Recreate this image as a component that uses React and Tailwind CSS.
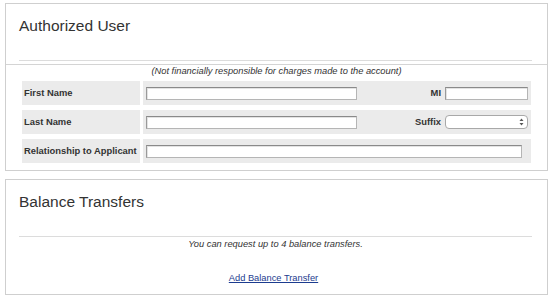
export default function App() {
  const font = { fontFamily: '"Liberation Sans", Arial, Helvetica, sans-serif' };
  const input =
    "h-[13px] bg-white border border-[#b5b5b5] border-t-[#8a8a8a] border-l-[#9a9a9a] shadow-[inset_1px_1px_0_#e3e3e3]";
  return (
    <div className="w-[550px] h-[297px] bg-white pt-[3px] pl-[5px] pr-[2px] text-[#333]" style={font}>
      <div className="border border-[#cfcfcf] h-[168px] flex flex-col">
        <div className="h-[57px] flex flex-col">
          <h2 className="pt-[13px] pl-[13px] text-[15.5px] leading-[18px] text-[#333]">Authorized User</h2>
          <div className="mt-auto ml-[13px] mr-[15px] border-t border-[#dcdcdc]" />
        </div>
        <div className="mt-[3px] border-t border-[#d4d4d4] flex-1">
          <p className="text-center italic text-[9.3px] leading-[11px] mt-[1px]">
            (Not financially responsible for charges made to the account)
          </p>
          <div className="mt-[4px] ml-[16px] mr-[16px] flex flex-col gap-[5px]">
            <div className="flex gap-[3px] h-[24px]">
              <div className="w-[118px] bg-[#ebebeb] flex items-center pl-[2px] text-[9.4px] font-bold">First Name</div>
              <div className="flex-1 bg-[#ebebeb] flex items-center pl-[3px]">
                <div className={`${input} w-[211px]`} />
                <span className="ml-auto mr-[4px] text-[9.4px] font-bold">MI</span>
                <div className={`${input} w-[83px] mr-[3px]`} />
              </div>
            </div>
            <div className="flex gap-[3px] h-[24px]">
              <div className="w-[118px] bg-[#ebebeb] flex items-center pl-[2px] text-[9.4px] font-bold">Last Name</div>
              <div className="flex-1 bg-[#ebebeb] flex items-center pl-[3px]">
                <div className={`${input} w-[211px]`} />
                <span className="ml-auto mr-[4px] text-[9.4px] font-bold">Suffix</span>
                <div className="w-[83px] h-[14px] mr-[3px] bg-white border border-[#a8a8a8] rounded-[4px] flex items-center justify-end pr-[3px]">
                  <svg width="5" height="8" viewBox="0 0 5 8">
                    <path d="M0.5 3 L2.5 0.5 L4.5 3 Z" fill="#555" />
                    <path d="M0.5 5 L2.5 7.5 L4.5 5 Z" fill="#555" />
                  </svg>
                </div>
              </div>
            </div>
            <div className="flex gap-[3px] h-[24px]">
              <div className="w-[118px] bg-[#ebebeb] flex items-center pl-[2px] text-[9.4px] font-bold whitespace-nowrap">
                Relationship to Applicant
              </div>
              <div className="flex-1 bg-[#ebebeb] flex items-center pl-[3px]">
                <div className={`${input} w-[376px]`} />
              </div>
            </div>
          </div>
        </div>
      </div>
      <div className="mt-[8px] border border-[#cfcfcf] h-[116px] flex flex-col">
        <div className="h-[57px] flex flex-col">
          <h2 className="pt-[13px] pl-[13px] text-[15.5px] leading-[18px] text-[#333]">Balance Transfers</h2>
          <div className="mt-auto ml-[13px] mr-[15px] border-t border-[#dcdcdc]" />
        </div>
        <p className="text-center italic text-[9.3px] leading-[11px] mt-[2px] pr-[2px]">
          You can request up to 4 balance transfers.
        </p>
        <p className="text-center text-[9.3px] leading-[11px] mt-[23px] pr-[6px]">
          <a href="#" className="underline text-[#1c3c8f]">Add Balance Transfer</a>
        </p>
      </div>
    </div>
  );
}
